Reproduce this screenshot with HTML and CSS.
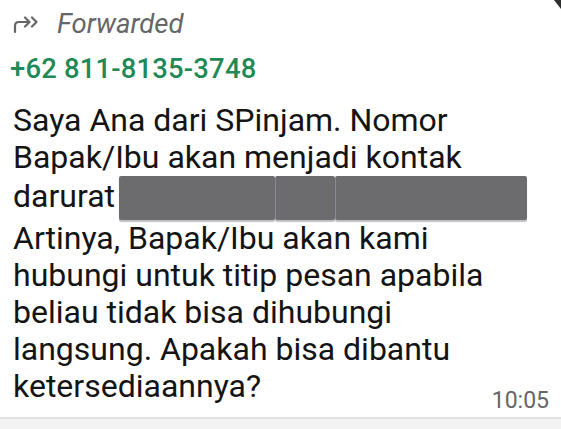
FILE: index.html
```html
<!DOCTYPE html>
<html lang="id">

<head>
    <meta charset="utf-8">
    <title>Pesan diteruskan</title>
    <link rel="stylesheet" href="styles.css">
</head>

<body>
    <div class="bubble">
        <span class="sudut"></span>

        <div class="diteruskan">
            <svg class="ikon" width="28" height="20" viewBox="0 0 28 20">
                <path d="M2 18 V12 Q2 8 6 8 H16" fill="none" stroke="#666" stroke-width="2.2" stroke-linecap="round" />
                <path d="M12 3.5 L16.5 8 L12 12.5" fill="none" stroke="#666" stroke-width="2.2" stroke-linecap="round" stroke-linejoin="round" />
                <path d="M19 3.5 L23.5 8 L19 12.5" fill="none" stroke="#666" stroke-width="2.2" stroke-linecap="round" stroke-linejoin="round" />
            </svg>
            <span>Forwarded</span>
        </div>

        <div class="pengirim">+62 811-8135-3748</div>

        <p class="isi">
            Saya Ana dari SPinjam. Nomor<br>
            Bapak/Ibu akan menjadi kontak<br>
            darurat <span class="sensor"><i class="a"></i><i class="b"></i><i class="c"></i></span><br>
            Artinya, Bapak/Ibu akan kami<br>
            hubungi untuk titip pesan apabila<br>
            beliau tidak bisa dihubungi<br>
            langsung. Apakah bisa dibantu<br>
            ketersediaannya?
        </p>

        <div class="waktu">10:05</div>
    </div>
</body>

</html>
```

FILE: styles.css
```css
body {
    margin: 0;
    background-color: #f3f3f3;
    font-family: Roboto, "Noto Sans", sans-serif;
}

.bubble {
    position: relative;
    background-color: #fff;
    height: 419px;
    border-bottom: 2px solid #e2e2e2;
    padding: 0 12px 0 13px;
    box-sizing: border-box;
}

.sudut {
    position: absolute;
    top: 0;
    right: 0;
    width: 0;
    height: 0;
    border-top: 9px solid #2b302e;
    border-left: 7px solid transparent;
}

.diteruskan {
    display: flex;
    align-items: center;
    gap: 16px;
    padding-top: 2px;
    height: 44px;
    line-height: 44px;
    color: #666;
    font-size: 27.5px;
    font-style: italic;
}

.pengirim {
    margin-top: 7px;
    margin-left: -3px;
    color: #1f8a57;
    font-size: 27.4px;
    line-height: 32px;
    font-weight: 500;
    letter-spacing: 0.2px;
}

.isi {
    margin: 17px 0 0;
    color: #141414;
    font-size: 32px;
    line-height: 37px;
}

.sensor {
    display: inline-flex;
    vertical-align: -13px;
    height: 44px;
    margin-left: -4px;
}

.sensor i {
    display: block;
    height: 100%;
    background-color: #6c6c6e;
    border-radius: 2px;
    box-shadow: 0 2px 1px rgba(0, 0, 0, 0.25);
}

.sensor .a {
    width: 156px;
}

.sensor .b {
    width: 59px;
    border-left: 1px solid #8a8aa0;
}

.sensor .c {
    width: 191px;
    border-left: 1px solid #8a8aa0;
}

.waktu {
    position: absolute;
    right: 12px;
    bottom: 3px;
    color: #666;
    font-size: 23px;
}
```
